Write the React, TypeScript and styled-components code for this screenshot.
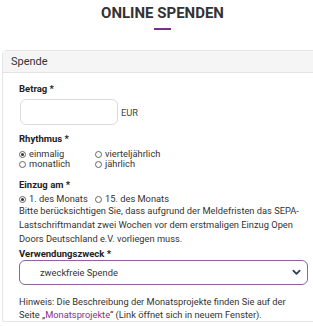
import React from "react";
import styled, { createGlobalStyle } from "styled-components";

const Global = createGlobalStyle`
  html, body { margin: 0; padding: 0; background: #fff; }
  body { font-family: Roboto, "Liberation Sans", Arial, sans-serif; color: #333; }
  * { box-sizing: border-box; }
`;

const Page = styled.div`
  width: 313px;
  height: 326px;
  overflow: hidden;
  display: flex;
  flex-direction: column;
  align-items: stretch;
`;

const Heading = styled.h1`
  flex-shrink: 0;
  margin: 4px 0 0 0;
  text-align: center;
  font-size: 15px;
  font-weight: 700;
  line-height: 18px;
  color: #333;
  padding-left: 12px;
`;

const Underline = styled.div`
  flex-shrink: 0;
  align-self: center;
  width: 17px;
  height: 2px;
  background: #7c2c8c;
  margin: 6px 0 0 12px;
`;

const Card = styled.section`
  flex-shrink: 0;
  margin: 20px -10px 0 2px;
  border: 1px solid #e6e6e6;
  border-radius: 4px 4px 0 0;
`;

const CardHeader = styled.div`
  background: #f5f5f5;
  border-bottom: 1px solid #e3e3e3;
  height: 22px;
  padding: 0 8px;
  display: flex;
  align-items: center;
  font-size: 11px;
  color: #333;
`;

const CardBody = styled.div`
  padding: 10px 16px 0 16px;
  display: flex;
  flex-direction: column;
  font-size: 9.3px;
`;

const Label = styled.div<{ $mt?: number }>`
  font-weight: 700;
  font-size: 9.5px;
  color: #222;
  line-height: 12px;
  margin-top: ${(p) => p.$mt ?? 0}px;
`;

const AmountRow = styled.div`
  display: flex;
  align-items: center;
  gap: 3px;
  margin-top: 4px;
`;

const AmountInput = styled.div`
  width: 98px;
  height: 26px;
  border: 1px solid #dcdcdc;
  border-radius: 6px;
  margin-left: 1px;
`;

const Unit = styled.span`
  font-size: 9.3px;
  color: #444;
`;

const RadioGrid = styled.div<{ $mt?: number }>`
  display: grid;
  grid-template-columns: 76px max-content;
  margin-top: ${(p) => p.$mt ?? 0}px;
`;

const RadioItem = styled.label`
  display: flex;
  align-items: center;
  gap: 3px;
  font-size: 9.3px;
  line-height: 10px;
  color: #333;
  white-space: nowrap;
`;

const RadioCircle = styled.span<{ $on?: boolean }>`
  flex-shrink: 0;
  width: 7px;
  height: 7px;
  border-radius: 50%;
  border: 1px solid #666;
  display: inline-flex;
  align-items: center;
  justify-content: center;
  &::after {
    content: "";
    width: 3px;
    height: 3px;
    border-radius: 50%;
    background: ${(p) => (p.$on ? "#333" : "transparent")};
  }
`;

const Paragraph = styled.p`
  margin: 0;
  font-size: 9.3px;
  line-height: 14px;
  color: #333;
`;

const Select = styled.div`
  margin-top: 0;
  height: 25px;
  margin-right: -2px;
  border: 1px solid #8e62a0;
  border-radius: 6px;
  display: flex;
  align-items: center;
  justify-content: space-between;
  padding: 0 6px 0 20px;
  font-size: 9.3px;
  color: #333;
`;

const Hint = styled.p`
  margin: 10px 0 0 0;
  font-size: 9.3px;
  line-height: 13px;
  color: #333;
`;

const Link = styled.a`
  color: #8a2f86;
  text-decoration: none;
`;

const Radio = ({ on, children }: { on?: boolean; children: React.ReactNode }) => (
  <RadioItem>
    <RadioCircle $on={on} />
    <span>{children}</span>
  </RadioItem>
);

export default function App() {
  return (
    <Page>
      <Global />
      <Heading>ONLINE SPENDEN</Heading>
      <Underline />
      <Card>
        <CardHeader>Spende</CardHeader>
        <CardBody>
          <Label>Betrag *</Label>
          <AmountRow>
            <AmountInput />
            <Unit>EUR</Unit>
          </AmountRow>
          <Label $mt={8}>Rhythmus *</Label>
          <RadioGrid $mt={4}>
            <Radio on>einmalig</Radio>
            <Radio>vierteljährlich</Radio>
            <Radio>monatlich</Radio>
            <Radio>jährlich</Radio>
          </RadioGrid>
          <Label $mt={10}>Einzug am *</Label>
          <RadioGrid $mt={3}>
            <Radio on>1. des Monats</Radio>
            <Radio>15. des Monats</Radio>
          </RadioGrid>
          <Paragraph>
            Bitte berücksichtigen Sie, dass aufgrund der Meldefristen das SEPA-<wbr />Lastschriftmandat zwei Wochen vor dem erstmaligen Einzug Open Doors Deutschland e.V. vorliegen muss.
          </Paragraph>
          <Label $mt={2}>Verwendungszweck *</Label>
          <Select>
            <span>zweckfreie Spende</span>
            <svg width="9" height="7" viewBox="0 0 10 7">
              <path d="M1.5 1.5 L5 5 L8.5 1.5" fill="none" stroke="#2c3e5c" strokeWidth="2" strokeLinecap="round" strokeLinejoin="round" />
            </svg>
          </Select>
          <Hint>
            Hinweis: Die Beschreibung der Monatsprojekte finden Sie auf der Seite „<Link href="#">Monatsprojekte</Link>“ (Link öffnet sich in neuem Fenster).
          </Hint>
        </CardBody>
      </Card>
    </Page>
  );
}
